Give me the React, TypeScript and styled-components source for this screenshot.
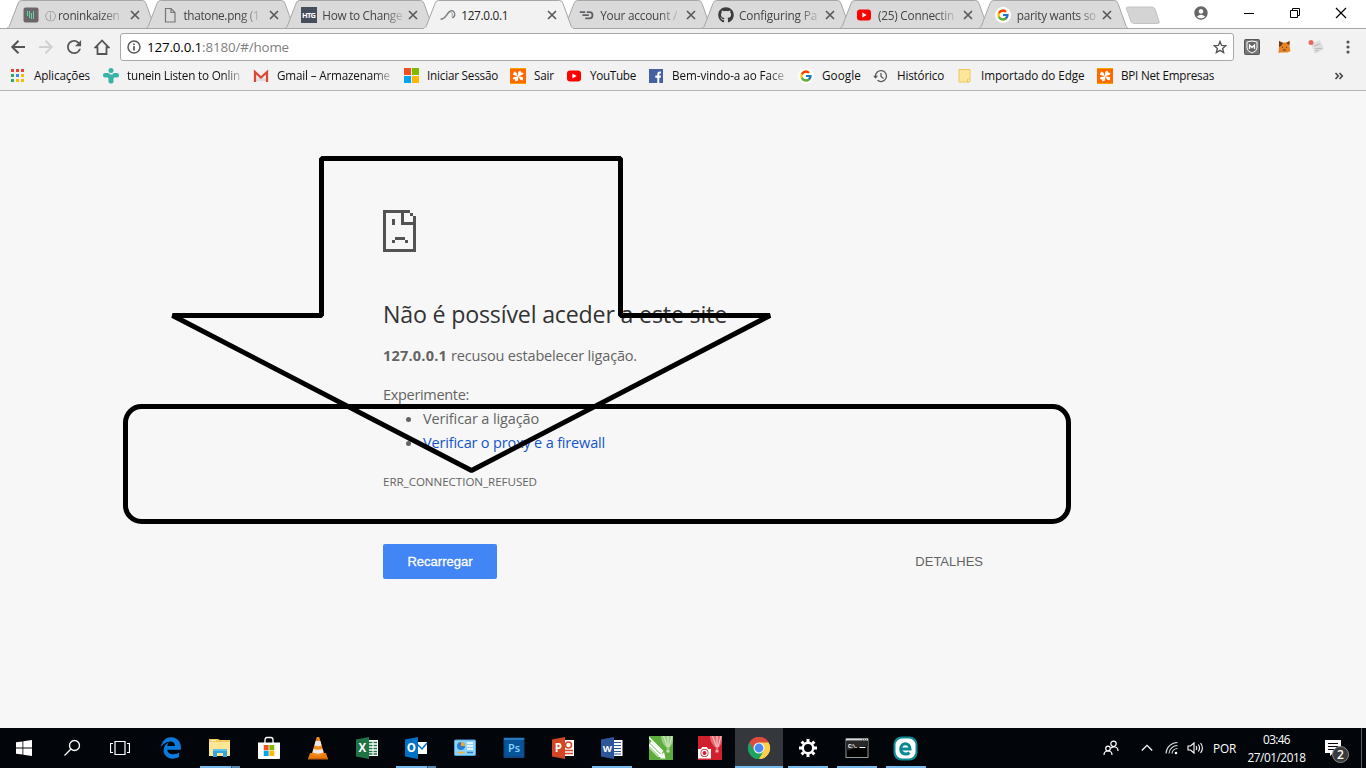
import React, { useLayoutEffect, useRef } from "react";
import styled, { createGlobalStyle, css } from "styled-components";
import { FaGithub, FaEdgeLegacy } from "react-icons/fa";
import { FcGoogle } from "react-icons/fc";
import { MdRefresh, MdAccountCircle } from "react-icons/md";

const UI_FONT = '"Open Sans", "Noto Sans", "Liberation Sans", sans-serif';

const GlobalStyle = createGlobalStyle`
  *, *::before, *::after { box-sizing: border-box; }
  body { margin: 0; overflow: hidden; font-family: ${UI_FONT}; }
  svg { display: block; flex: none; }
`;

const Screen = styled.div`
  position: relative;
  display: flex;
  flex-direction: column;
  width: 1366px;
  height: 768px;
  background: #f7f7f7;
`;

/* ---------- text set to a fixed measure ---------- */

const Measure = styled.span<{ $width: number; $fade?: boolean }>`
  display: block;
  flex: none;
  width: ${(p) => p.$width}px;
  white-space: pre;
  ${(p) =>
    p.$fade &&
    css`
      mask-image: linear-gradient(to right, #000 calc(100% - 18px), rgba(0, 0, 0, 0.2));
    `}
`;

function FitText({
  width,
  box,
  fade,
  children,
}: {
  width: number;
  box?: number;
  fade?: boolean;
  children: React.ReactNode;
}) {
  const ref = useRef<HTMLSpanElement>(null);
  useLayoutEffect(() => {
    const el = ref.current;
    if (!el) return;
    el.style.letterSpacing = "0px";
    const natural = el.getBoundingClientRect().width;
    const count = (el.textContent || "").length;
    el.style.letterSpacing = `${(width - natural) / count}px`;
  }, [width, children]);
  return (
    <Measure $width={box ?? width} $fade={fade}>
      <span ref={ref}>{children}</span>
    </Measure>
  );
}

/* ---------- tab strip ---------- */

const TabStrip = styled.header`
  position: relative;
  display: flex;
  height: 29px;
  padding-left: 6px;
  background: #fff;
  border-bottom: 1px solid #a6a6a6;
`;

const TabItem = styled.div<{ $active?: boolean }>`
  position: relative;
  z-index: ${(p) => (p.$active ? 2 : 1)};
  flex: none;
  width: 151px;
  height: 29px;
  margin-right: -12.1px;
`;

const TabShape = styled.svg`
  position: absolute;
  inset: 0;
`;

const TabContent = styled.div<{ $active?: boolean }>`
  position: relative;
  display: grid;
  grid-template-columns: 16px 82px 10px;
  column-gap: 4.5px;
  align-items: center;
  height: 29px;
  padding: 1px 0 0 17px;
  font-size: 11.8px;
  line-height: 16px;
  color: ${(p) => (p.$active ? "#222" : "#444")};
`;

const TabTitle = styled.div<{ $inset?: number }>`
  padding-left: ${(p) => p.$inset ?? 0}px;
  overflow: hidden;

  i {
    font-style: normal;
    font-size: 11px;
    color: #888;
  }
`;

const NewTab = styled.svg`
  margin: 6px 0 0 8px;
`;

const WindowControls = styled.div`
  display: flex;
  align-items: center;
  gap: 34px;
  height: 26px;
  margin-left: auto;
  padding-right: 19px;
`;

/* ---------- toolbar ---------- */

const Toolbar = styled.div`
  display: flex;
  align-items: center;
  height: 35px;
  padding: 1px 8px 0 10px;
  background: #f2f2f2;
`;

const NavButtons = styled.div`
  display: flex;
  flex: none;
  gap: 12px;
  width: 110px;
`;

const AddressBar = styled.div`
  display: flex;
  align-items: center;
  width: 1114px;
  flex: none;
  height: 28px;
  padding: 0 6px 0 6px;
  background: #fff;
  border: 1px solid #a9a9a9;
  border-radius: 3px;
  font-size: 13.4px;
  color: #000;
`;

const AddressText = styled.div`
  flex: 1;
  padding-left: 6px;
  line-height: 20px;

  i {
    font-style: normal;
    color: #808080;
  }
`;

const Extensions = styled.div`
  display: flex;
  align-items: center;
  gap: 16px;
  margin-left: 10px;
`;

const BookmarksBar = styled.nav`
  display: flex;
  align-items: center;
  gap: 12px;
  height: 27px;
  padding: 0 22px 3px 10px;
  background: #f2f2f2;
  border-bottom: 1px solid #b6b4b6;
  font-size: 11.7px;
  line-height: 15px;
  color: #111;
`;

const Bookmark = styled.div`
  display: flex;
  align-items: center;
  gap: 8px;
  flex: none;
`;

const IconSlot = styled.div`
  display: flex;
  align-items: center;
  justify-content: center;
  width: 16px;
  height: 16px;
`;

const Overflow = styled.div`
  margin-left: auto;
`;

/* ---------- error page ---------- */

const Page = styled.main`
  flex: 1;
  padding: 119px 0 0 383px;
  color: #646464;
  font-size: 14.5px;
  line-height: 24px;
`;

const ErrorBody = styled.section`
  width: 600px;
`;

const Title = styled.h1`
  margin: 46px 0 0;
  font-size: 23.2px;
  font-weight: 400;
  line-height: 33px;
  color: #333;
`;

const Reason = styled.p`
  display: flex;
  gap: 4px;
  margin: 13px 0 0;
`;

const Hint = styled.p`
  margin: 15px 0 0;
`;

const Suggestions = styled.ul`
  margin: 0;
  padding: 0 0 0 40px;
  list-style: none;
`;

const Suggestion = styled.li`
  display: flex;
  align-items: center;
  height: 24px;

  &::before {
    content: "";
    width: 5px;
    height: 5px;
    margin: 1px 12px 0 -17px;
    border-radius: 50%;
    background: #646464;
  }
`;

const Link = styled.a`
  color: #1155cc;
`;

const ErrorCode = styled.div`
  margin-top: 15px;
  font-size: 11.6px;
`;

const Actions = styled.div`
  display: flex;
  align-items: center;
  justify-content: space-between;
  margin-top: 50px;
  font-family: "Liberation Sans", Arial, sans-serif;
  font-size: 13px;
  line-height: 15px;
`;

const ReloadButton = styled.button`
  display: flex;
  justify-content: center;
  align-items: center;
  width: 114px;
  height: 35px;
  padding: 0;
  border: 0;
  border-radius: 2px;
  background: #4285f4;
  color: #fff;
  font: inherit;
  -webkit-text-stroke: 0.3px #fff;
`;

const Annotation = styled.svg`
  position: absolute;
  left: 0;
  top: 0;
  pointer-events: none;
`;

/* ---------- taskbar ---------- */

const Taskbar = styled.footer`
  display: flex;
  height: 40px;
  background: #02060b;
  color: #fff;
`;

const SystemButtons = styled.div`
  display: flex;
  width: 146px;
`;

const SystemButton = styled.div`
  display: flex;
  align-items: center;
  justify-content: center;
  width: 48px;
`;

const Apps = styled.div`
  display: flex;
`;

const AppButton = styled.div<{ $focused?: boolean }>`
  display: flex;
  align-items: center;
  justify-content: center;
  position: relative;
  width: 49px;
  height: 40px;
  background: ${(p) => (p.$focused ? "linear-gradient(#34383c, #34383c) center / 48px 40px no-repeat" : "none")};
`;

const RunningBar = styled.span<{ $kind: "one" | "many" | "full" }>`
  position: absolute;
  bottom: 0;
  left: ${(p) => (p.$kind === "full" ? 0.5 : 4.5)}px;
  right: ${(p) => (p.$kind === "full" ? 0.5 : 4.5)}px;
  height: 2px;
  background: ${(p) =>
    p.$kind === "many"
      ? "linear-gradient(to right, #76b9ed 31px, #33506a 31px, #33506a 32px, #5688ae 32px)"
      : "#76b9ed"};
`;

const Tray = styled.div`
  display: flex;
  align-items: center;
  margin-left: auto;
  font-size: 11.8px;
  line-height: 18px;
`;

const TrayIcon = styled.div<{ $width: number }>`
  display: flex;
  justify-content: center;
  width: ${(p) => p.$width}px;
`;

const Clock = styled.div`
  display: flex;
  flex-direction: column;
  align-items: center;
  width: 81px;
  margin-right: 1px;
`;

const Notifications = styled.div`
  position: relative;
  width: 44px;
  height: 40px;
  padding: 12px 0 0 7px;
  border-right: 1px solid #5a5d60;
  margin-right: 4px;
`;

const Badge = styled.span`
  position: absolute;
  left: 14px;
  top: 18px;
  width: 17px;
  height: 17px;
  border: 1px solid #8a8a8a;
  border-radius: 50%;
  background: #3a3a3a;
  font-size: 12px;
  font-weight: 600;
  line-height: 15px;
  text-align: center;
`;

/* ---------- small icons ---------- */

const CloseIcon = () => (
  <svg width="10" height="10" viewBox="0 0 10 10" stroke="#5a5a5a" strokeWidth="1.7">
    <path d="M1 1l8 8M9 1L1 9" />
  </svg>
);

const YouTubeIcon = () => (
  <svg width="16" height="16" viewBox="0 0 16 16">
    <rect x="1" y="2.5" width="14" height="11" rx="3" fill="#f00" />
    <path d="M6.4 5.6v4.8L10.6 8z" fill="#fff" />
  </svg>
);

const GoogleIcon = () => (
  <svg width="16" height="16" viewBox="0 0 16 16">
    <circle cx="8" cy="8" r="8" fill="#fff" />
    <svg x="1.3" y="1.3" width="13.4" height="13.4" viewBox="0 0 24 24">
      <FcGoogle size={24} />
    </svg>
  </svg>
);

const BarsIcon = () => (
  <svg width="16" height="16" viewBox="0 0 16 16">
    <rect x="0.5" y="0.5" width="15" height="15" rx="2" fill="#6c666b" />
    <path d="M4.500 4v5M6.500 4v7M8.500 6v6M10.500 4v8" stroke="#62d6a0" strokeWidth="1" />
  </svg>
);

const FileIcon = () => (
  <svg width="16" height="16" viewBox="0 0 16 16" fill="none" stroke="#777" strokeWidth="1.2">
    <path d="M3.5 1.5h5.5l4 4v9.500h-9.500zM9 1.500v4h4" />
  </svg>
);

const HtgIcon = () => (
  <svg width="16" height="16" viewBox="0 0 16 16">
    <rect width="16" height="16" fill="#454f5c" />
    <text x="8" y="10.800" fontSize="7.500" fontWeight="700" fill="#fff" textAnchor="middle" textLength="14" fontFamily="Open Sans, sans-serif">
      HTG
    </text>
  </svg>
);

const SwooshIcon = () => (
  <svg width="16" height="16" viewBox="0 0 16 16" fill="none" stroke="#777">
    <path d="M.5 12.200C4.500 12.200 5.500 9.500 7.500 6.500S12 2.800 13.800 4.800 15 10 12.200 10.800" strokeWidth="1.300" />
    <path d="M3 11.800C6 10.500 6.800 8.500 8.500 6.500s3.200-2 3.700.3-.4 3-.4 3" strokeWidth="1" stroke="#999" />
  </svg>
);

const SpeedIcon = () => (
  <svg width="16" height="16" viewBox="0 0 16 16" fill="none" stroke="#5f6064" strokeWidth="1.800">
    <path d="M.8 5.200h5.400M3.500 8.200h6.300M7.800 5.200h2.700c4 0 4 6.200 0 6.200H6.300" />
  </svg>
);

const AppsIcon = () => {
  const colors = ["#ea4335", "#ea4335", "#ea4335", "#34a853", "#4285f4", "#fbbc05", "#34a853", "#fbbc05", "#fbbc05"];
  return (
    <svg width="16" height="16" viewBox="0 0 16 16">
      {colors.map((c, i) => (
        <rect key={i} x={1 + (i % 3) * 5} y={1 + Math.floor(i / 3) * 5} width="3" height="3" fill={c} />
      ))}
    </svg>
  );
};

const TuneInIcon = () => (
  <svg width="16" height="16" viewBox="0 0 16 16" fill="#36b4a7">
    <circle cx="8" cy="2.600" r="2.500" />
    <rect x="0" y="5" width="7" height="4.500" rx="2" />
    <rect x="9.500" y="5" width="6.500" height="4.500" rx="2" />
    <rect x="5.500" y="9" width="5" height="6.500" rx="2" />
    <path d="M5 6.500h6v4H5z" />
  </svg>
);

const GmailIcon = () => (
  <svg width="16" height="16" viewBox="0 0 16 16">
    <path d="M1 3h14v11H1z" fill="#f1efef" />
    <path d="M2 13l4.500-4.500L8 10l1.500-1.500L14 13z" fill="#ddd" />
    <path d="M2 14V4l6 5.500L14 4v10" fill="none" stroke="#d9483b" strokeWidth="2.300" />
  </svg>
);

const MicrosoftIcon = ({ size = 15 }: { size?: number }) => (
  <svg width={size} height={size} viewBox="0 0 15 15">
    <path d="M0 0h7v7H0z" fill="#f25022" />
    <path d="M8 0h7v7H8z" fill="#7fba00" />
    <path d="M0 8h7v7H0z" fill="#00a4ef" />
    <path d="M8 8h7v7H8z" fill="#ffb900" />
  </svg>
);

const BpiIcon = () => (
  <svg width="16" height="16" viewBox="0 0 16 16">
    <rect width="16" height="16" fill="#ff6a00" />
    <path d="M0 .5h16M0 15.500h16" stroke="#f5a400" />
    <g fill="#fff">
      <path d="M8 8.500L3 6.800 4 3.500l2.500 1.200z" />
      <path d="M8 8.500L8.200 4l2-1.500.8 2 2.500.5-1 1.800z" />
      <path d="M8 8l4.800 1.200.2 3-2.500-.2z" />
      <path d="M8.500 8.200L8 12.500 5.500 13.500 5 11.500 2.800 11l.8-1.800z" />
    </g>
  </svg>
);

const FacebookIcon = () => (
  <svg width="16" height="16" viewBox="0 0 16 16">
    <rect x="1" y="1" width="14" height="14" fill="#4460a0" />
    <path d="M9.300 15V9.700H7.300V7.400h2V6c0-2 1.200-2.800 3.600-2.500v2c-1.200-.1-1.600.1-1.600.9v1H13l-.3 2.300h-1.400V15z" fill="#fff" />
  </svg>
);

const HistoryIcon = () => (
  <svg width="16" height="16" viewBox="0 0 16 16" fill="none" stroke="#5a5a5a" strokeWidth="1.300">
    <path d="M2.500 8.500A5.500 5.500 0 1 1 4.500 12.300M8 5v3.500l2.500 2" />
    <path d="M.1 7.800h5L2.500 10.800z" fill="#5a5a5a" stroke="none" />
  </svg>
);

const FolderIcon = () => (
  <svg width="16" height="16" viewBox="0 0 16 16">
    <path d="M2 1.500h11v9l-1 3.500H2z" fill="#ffe69a" stroke="#ecc85c" />
    <path d="M10.500 14v-3H13v2.500z" fill="#fff3c4" stroke="#ecc85c" />
  </svg>
);

/* ---------- data ---------- */

const tabs = [
  { icon: <BarsIcon />, mark: "ⓘ", title: " roninkaizen", width: 75, inset: 1, fade: true },
  { icon: <FileIcon />, title: "thatone.png (1", width: 76, inset: 1, fade: true },
  { icon: <HtgIcon />, title: "How to Change", width: 80, inset: 1, fade: true },
  { icon: <SwooshIcon />, title: "127.0.0.1", width: 47, inset: 1, active: true },
  { icon: <SpeedIcon />, title: "Your account /", width: 77, inset: 1, fade: true },
  { icon: <FaGithub size={16} color="#3c3c3c" />, title: "Configuring Pa", width: 78, inset: 1, fade: true },
  { icon: <YouTubeIcon />, title: "(25) Connectin", width: 76, inset: 1, fade: true },
  { icon: <GoogleIcon />, title: "parity wants so", width: 79, inset: 1, fade: true },
];

const bookmarks = [
  { icon: <AppsIcon />, label: "Aplicações", width: 56, box: 57 },
  { icon: <TuneInIcon />, label: "tunein Listen to Onlin", width: 113, box: 114, fade: true },
  { icon: <GmailIcon />, label: "Gmail – Armazename", width: 113, box: 114, fade: true },
  { icon: <MicrosoftIcon />, label: "Iniciar Sessão", width: 71, box: 71 },
  { icon: <BpiIcon />, label: "Sair", width: 20, box: 20 },
  { icon: <YouTubeIcon />, label: "YouTube", width: 46, box: 46 },
  { icon: <FacebookIcon />, label: "Bem-vindo-a ao Face", width: 112, box: 114, fade: true },
  { icon: <GoogleIcon />, label: "Google", width: 39, box: 39 },
  { icon: <HistoryIcon />, label: "Histórico", width: 47, box: 48 },
  { icon: <FolderIcon />, label: "Importado do Edge", width: 103.5, box: 104 },
  { icon: <BpiIcon />, label: "BPI Net Empresas", width: 93, box: 94 },
];

/* ---------- taskbar icons ---------- */

const OfficeIcon = ({ color, letter, children }: { color: string; letter: string; children: React.ReactNode }) => (
  <svg width="24" height="24" viewBox="0 0 24 24">
    {children}
    <path d="M1 3.500L14 1v22L1 20.500z" fill={color} />
    <text x="7.300" y="16" fontSize={letter === "W" ? 9.5 : 11.5} fontWeight="700" fill="#fff" textAnchor="middle" fontFamily="Open Sans, sans-serif">
      {letter}
    </text>
  </svg>
);

const ExplorerIcon = () => (
  <svg width="24" height="24" viewBox="0 0 24 24">
    <path d="M1 3h9l2 1h10v16H1z" fill="#f5c95b" />
    <path d="M1 6h21v14H1z" fill="#ffe694" />
    <path d="M3 4h5v1.200H3z" fill="#fff4c8" />
    <path d="M5 21v-8h14v8h-4v-4H9v4z" fill="#35a5dd" />
    <path d="M5 13h14v2H5z" fill="#5dc0ee" />
  </svg>
);

const StoreIcon = () => (
  <svg width="24" height="24" viewBox="0 0 24 24">
    <path d="M8 7V4q0-2.500 2-2.500h4q2 0 2 2.500v3" fill="none" stroke="#fff" strokeWidth="1.300" />
    <path d="M1 6.500h22V22q0 1-1 1H2q-1 0-1-1z" fill="#fff" />
    <svg x="6.500" y="9" width="11" height="11" viewBox="0 0 15 15">
      <MicrosoftIcon />
    </svg>
  </svg>
);

const VlcIcon = () => (
  <svg width="24" height="24" viewBox="0 0 24 24">
    <path d="M4 17h16l2 6H2z" fill="#e87b0c" />
    <path d="M10.800 1h2.400l5.200 17.500q-6.500 3-12.800 0z" fill="#f58a1c" />
    <path d="M9.600 5h4.800l1.200 4.500q-3.600 1.500-7.200 0zM7.500 13q4.500 1.600 9 0l1 3.500q-5.500 2.300-11 0z" fill="#e9e9e9" />
    <path d="M2 22h20v1.500H2z" fill="#c96206" />
  </svg>
);

const ControlPanelIcon = () => (
  <svg width="22" height="18" viewBox="0 0 22 18">
    <rect x=".5" y="1" width="21" height="15.500" rx="1" fill="#8ed2f8" stroke="#4ba3dd" />
    <circle cx="7" cy="7" r="4" fill="#2a7fd0" />
    <path d="M7 7V3a4 4 0 0 1 4 4z" fill="#f7a728" />
    <path d="M13 4h6M13 7h6M13 10h6" stroke="#fff" strokeWidth="1.500" />
    <path d="M3 13.500h8" stroke="#f0b23a" strokeWidth="1.500" />
    <path d="M13 13.500h6" stroke="#2a7fd0" strokeWidth="1.500" />
  </svg>
);

const PhotoshopIcon = () => (
  <svg width="24" height="24" viewBox="0 0 24 24">
    <rect x="1.500" y="1.500" width="21" height="20.500" rx="1" fill="#0d4884" />
    <path d="M2 2h20v2H2z" fill="#2c78bd" />
    <path d="M3 4h18v16H3z" fill="#07549a" />
    <text x="12" y="15.500" fontSize="11" fontWeight="600" fill="#8bd5ff" textAnchor="middle" fontFamily="Open Sans, sans-serif">
      Ps
    </text>
  </svg>
);

const CorelIcon = ({ red }: { red?: boolean }) => (
  <svg width="24" height="24" viewBox="0 0 24 24">
    <rect width="24" height="24" fill={red ? "#d0202e" : "#5fac3e"} />
    <path d="M12 0q0 7 5.500 11.500L18 14h2l.5-2.500Q24 8 24 3V0z" fill={red ? "#e56c74" : "#9bcd84"} />
    <path d="M14.500 0l4 11M19 0v11M23 0l-3 11" stroke={red ? "#f7c9cc" : "#d3eac9"} strokeWidth="1" />
    <path d="M17.500 14h3v2.500h-3z" fill={red ? "#f0a8ad" : "#c6e2ba"} />
    {red ? (
      <g>
        <path d="M0 13h3l1-2h5l1 2h3v9.500H0z" fill="#fff" />
        <circle cx="6.500" cy="17" r="4" fill="#d0202e" />
        <circle cx="6.500" cy="17" r="2.600" fill="none" stroke="#fff" strokeWidth="1.300" />
      </g>
    ) : (
      <g>
        <path d="M0 8.500L2.500 5 13 15.500 14.500 22 8.500 20.500 0 12z" fill="#fff" />
        <path d="M1 7.500L11.500 18M0 10.500l9.500 9.500" stroke="#5fac3e" strokeWidth=".9" />
        <path d="M0 1.500l14 14" stroke="#fff" strokeWidth="1.400" />
        <path d="M11 22.500h5.500L15 16z" fill="#fff" />
      </g>
    )}
  </svg>
);

const ChromeIcon = () => (
  <svg width="24" height="24" viewBox="0 0 24 24">
    <path d="M12 12L2.470 6.500A11 11 0 0 1 21.530 6.500z" fill="#dd4b3e" />
    <path d="M12 12l9.530-5.500A11 11 0 0 1 12 23z" fill="#fdd04b" />
    <path d="M12 12v11A11 11 0 0 1 2.470 6.500z" fill="#1da362" />
    <path d="M12 6.500h9.530A11 11 0 0 0 2.470 6.500l4.800 8.250z" fill="#dd4b3e" />
    <path d="M16.760 14.750L12 23a11 11 0 0 0 9.530-16.500H12z" fill="#fdd04b" />
    <path d="M7.240 14.750L2.470 6.500A11 11 0 0 0 12 23l4.760-8.250z" fill="#1da362" />
    <circle cx="12" cy="12" r="5.500" fill="#f2f2f2" />
    <circle cx="12" cy="12" r="4.400" fill="#4a8af4" />
  </svg>
);

const GearIcon = () => (
  <svg width="20" height="20" viewBox="-10 -10 20 20" fill="none" stroke="#fff">
    <circle r="5.200" strokeWidth="2.400" />
    {[0, 45, 90, 135, 180, 225, 270, 315].map((a) => (
      <path key={a} d="M0-6v-3" strokeWidth="3" transform={`rotate(${a})`} />
    ))}
  </svg>
);

const TerminalIcon = () => (
  <svg width="24" height="20" viewBox="0 0 24 20">
    <rect x="1" y="1" width="22" height="18.500" fill="#000" stroke="#9a9a9a" />
    <path d="M1 3L23 3 23 8Q12 9 1 13z" fill="#292929" />
    <path d="M1 1.500h22" stroke="#dcdcdc" strokeWidth="2" />
    <path d="M17 1.500h5" stroke="#777" strokeDasharray="1 1" />
    <text x="3" y="10" fontSize="6" fontWeight="700" fill="#fff" fontFamily="Liberation Mono, monospace" textLength="10">
      C:\.
    </text>
    <path d="M14.500 9.500h6" stroke="#fff" />
  </svg>
);

const EsetIcon = () => (
  <svg width="25" height="25" viewBox="0 0 25 25">
    <rect x=".5" y=".5" width="24" height="24" rx="8" fill="#0c8a93" />
    <rect x="2.500" y="2.500" width="20" height="20" rx="6.500" fill="#fff" />
    <path d="M7.500 13H17c0-7-9.300-7-9.300 0 0 5.600 6.200 6 8.800 3.600" fill="none" stroke="#0c8a93" strokeWidth="3" />
  </svg>
);

const taskbarApps: { icon: React.ReactNode; running?: "one" | "many" | "full" }[] = [
  { icon: <FaEdgeLegacy size={22} color="#0a7bdc" /> },
  { icon: <ExplorerIcon />, running: "many" },
  { icon: <StoreIcon /> },
  { icon: <VlcIcon /> },
  {
    icon: (
      <OfficeIcon color="#207346" letter="X">
        <rect x="12" y="4" width="11" height="16" fill="#fff" />
        <path d="M14 6.500h8M14 9.500h8M14 12.500h8M14 15.500h8M14 18h8" stroke="#207346" strokeWidth="1.400" />
        <path d="M18 4v16" stroke="#fff" />
      </OfficeIcon>
    ),
  },
  {
    icon: (
      <OfficeIcon color="#0072c6" letter="O">
        <rect x="12" y="6" width="11" height="12" fill="#fff" />
        <path d="M13 8l5 5 5-6" stroke="#0072c6" fill="none" strokeWidth="1.500" />
      </OfficeIcon>
    ),
    running: "many",
  },
  { icon: <ControlPanelIcon /> },
  { icon: <PhotoshopIcon /> },
  {
    icon: (
      <OfficeIcon color="#d24625" letter="P">
        <rect x="12" y="4" width="11" height="16" fill="#fff" />
        <circle cx="17.500" cy="9" r="3" fill="none" stroke="#d24625" strokeWidth="1.500" />
        <path d="M14 14.500h8M14 17.500h8" stroke="#d24625" strokeWidth="1.300" />
      </OfficeIcon>
    ),
  },
  {
    icon: (
      <OfficeIcon color="#2b579a" letter="W">
        <rect x="12" y="4" width="10.500" height="16" fill="#fff" />
        <path d="M14 6.500h7M14 9.500h7M14 12.500h7M14 15.500h7M14 18h7" stroke="#2b579a" strokeWidth="1.200" />
      </OfficeIcon>
    ),
    running: "one",
  },
  { icon: <CorelIcon /> },
  { icon: <CorelIcon red /> },
  { icon: <ChromeIcon />, running: "full" },
  { icon: <GearIcon />, running: "one" },
  { icon: <TerminalIcon />, running: "one" },
  { icon: <EsetIcon />, running: "one" },
];

/* ---------- page ---------- */

export default function App() {
  return (
    <Screen>
      <GlobalStyle />
      <TabStrip>
        {tabs.map((t) => (
          <TabItem key={t.title} $active={t.active}>
            <TabShape width="151" height="29" viewBox="0 0 151 29">
              <path
                d="M.5 28.500C3 27.500 3.500 26 4.500 23L12 3.500Q13 .5 15.500 .5H136.500Q139 .5 140 3.500L147 23C148 26 148.500 27.500 150.500 28.500"
                fill={t.active ? "#f2f2f2" : "#dadada"}
                stroke="#a6a6a6"
              />
              <path d="M1 28.500h149" stroke={t.active ? "#f2f2f2" : "#a6a6a6"} />
            </TabShape>
            <TabContent $active={t.active}>
              {t.icon}
              <TabTitle $inset={t.inset}>
                <FitText width={t.width} fade={t.fade}>
                  {t.mark && <i>{t.mark}</i>}
                  {t.title}
                </FitText>
              </TabTitle>
              <CloseIcon />
            </TabContent>
          </TabItem>
        ))}
        <NewTab width="36" height="19" viewBox="0 0 36 19">
          <path d="M3 1h24q2 0 3 2l4 12q1 2.500-1.500 2.500H9q-2 0-3-2L1.500 3Q1 1 3 1z" fill="#d4d4d4" stroke="#c2c2c2" />
        </NewTab>
        <WindowControls>
          <MdAccountCircle size={16} color="#666" />
          <svg width="12" height="12" viewBox="0 0 12 12" stroke="#000">
            <path d="M1 6.500h10" />
          </svg>
          <svg width="12" height="12" viewBox="0 0 12 12" fill="none" stroke="#000">
            <path d="M1.500 3.500h7v7h-7zM3.500 3.500v-2h7v7h-2" />
          </svg>
          <svg width="12" height="12" viewBox="0 0 12 12" stroke="#000" strokeWidth="1.200">
            <path d="M1 1l10 10M11 1L1 11" />
          </svg>
        </WindowControls>
      </TabStrip>

      <Toolbar>
        <NavButtons>
          <svg width="16" height="16" viewBox="0 0 16 16" fill="none" stroke="#555" strokeWidth="2">
            <path d="M15 8H2.500M8.500 1.800L2.300 8l6.200 6.200" />
          </svg>
          <svg width="16" height="16" viewBox="0 0 16 16" fill="none" stroke="#d0d0d0" strokeWidth="2">
            <path d="M1 8h12.500M7.500 1.800L13.700 8l-6.200 6.200" />
          </svg>
          <svg width="16" height="16" viewBox="0 0 16 16">
            <svg x="-2.400" y="-2.400" width="21" height="21" viewBox="0 0 24 24">
              <MdRefresh size={24} color="#555" />
            </svg>
          </svg>
          <svg width="16" height="16" viewBox="1 0 16 16" fill="none" stroke="#555" strokeWidth="1.800">
            <path d="M9 1.500L2.500 8.300h2V15h9V8.300h2z" />
          </svg>
        </NavButtons>
        <AddressBar>
          <svg width="14" height="14" viewBox="0 0 14 14" fill="none" stroke="#5a5a5a" strokeWidth="1.500">
            <circle cx="7" cy="7" r="6" />
            <path d="M7 6v4.500M7 3.400v1.600" strokeWidth="1.700" />
          </svg>
          <AddressText>
            <FitText width={142}>
              127.0.0.1<i>:8180/#/home</i>
            </FitText>
          </AddressText>
          <svg width="14" height="14" viewBox="0 0 14 14" fill="none" stroke="#555" strokeWidth="1.400">
            <path d="M7 1.500l1.600 3.900 4.200.3-3.200 2.700 1 4.100L7 10.300l-3.600 2.200 1-4.100L1.200 5.700l4.200-.3z" />
          </svg>
        </AddressBar>
        <Extensions>
          <svg width="16" height="16" viewBox="0 0 16 16">
            <rect x=".5" y=".5" width="15" height="15" rx="1" fill="#777" stroke="#555" />
            <path d="M8 2l5 1v6q0 3-5 5-5-2-5-5V3z" fill="#666" stroke="#fff" />
            <path d="M5.500 10V6L8 8.500 10.500 6v4" fill="none" stroke="#fff" strokeWidth="1.300" />
          </svg>
          <svg width="16" height="16" viewBox="0 0 16 16">
            <path d="M3 2l3 1.500h5L13.500 2v5l1 5-3 1.500H5l-2.500.5L3 9z" fill="#e88324" />
            <path d="M3 2l4 2-2 3-2 1zM10 4l3.500-2v4z" fill="#6b3a18" />
            <path d="M6 8l1 .8M11 8l-1 .8M7 11h3" stroke="#5a3a20" />
          </svg>
          <svg width="16" height="16" viewBox="0 0 16 16">
            <path d="M3 5l9-4 4 9-9 5z" fill="#dedede" />
            <path d="M6 7l6-2M7 9.500h7M7 12l4-1" stroke="#bbb" />
            <circle cx="3" cy="3.500" r="2.500" fill="#e8685c" />
          </svg>
          <svg width="16" height="16" viewBox="0 0 16 16" fill="#555">
            <circle cx="8" cy="3" r="1.600" />
            <circle cx="8" cy="8" r="1.600" />
            <circle cx="8" cy="13" r="1.600" />
          </svg>
        </Extensions>
      </Toolbar>

      <BookmarksBar>
        {bookmarks.map((b) => (
          <Bookmark key={b.label}>
            <IconSlot>{b.icon}</IconSlot>
            <FitText width={b.width} box={b.box} fade={b.fade}>
              {b.label}
            </FitText>
          </Bookmark>
        ))}
        <Overflow>
          <svg width="10" height="8" viewBox="0 0 10 8" fill="none" stroke="#444" strokeWidth="1.600">
            <path d="M1.500 1L4.300 4 1.500 7M5.500 1l2.800 3-2.800 3" />
          </svg>
        </Overflow>
      </BookmarksBar>

      <Page>
        <ErrorBody>
          <svg width="33" height="42" viewBox="0 0 33 42" fill="#535353" shapeRendering="crispEdges">
            <path d="M0 0h27v3h-6v9h9V6h3v36H0zM3 3v36h27V15H18V3z" fillRule="evenodd" />
            <path d="M27 3h3v3h-3zM9 9h3v6H9zM12 27h10v3H12zM9 30h3v3H9zM22 30h3v3h-3z" />
          </svg>
          <Title>
            <FitText width={344}>Não é possível aceder a este site</FitText>
          </Title>
          <Reason>
            <b>
              <FitText width={64}>127.0.0.1</FitText>
            </b>
            <FitText width={186}>recusou estabelecer ligação.</FitText>
          </Reason>
          <Hint>
            <FitText width={86}>Experimente:</FitText>
          </Hint>
          <Suggestions>
            <Suggestion>
              <FitText width={116}>Verificar a ligação</FitText>
            </Suggestion>
            <Suggestion>
              <Link>
                <FitText width={182}>Verificar o proxy e a firewall</FitText>
              </Link>
            </Suggestion>
          </Suggestions>
          <ErrorCode>
            <FitText width={154}>ERR_CONNECTION_REFUSED</FitText>
          </ErrorCode>
          <Actions>
            <ReloadButton>Recarregar</ReloadButton>
            <span>DETALHES</span>
          </Actions>
        </ErrorBody>
      </Page>

      <Taskbar>
        <SystemButtons>
          <SystemButton>
            <svg width="16" height="16" viewBox="0 0 16 16" fill="#fff">
              <path d="M0 2.300L6.500 1.400v6.200H0zM7.300 1.300L16 0v7.600H7.300zM0 8.400h6.500v6.200L0 13.700zM7.300 8.400H16V16l-8.700-1.300z" />
            </svg>
          </SystemButton>
          <SystemButton>
            <svg width="18" height="18" viewBox="0 0 18 18" fill="none" stroke="#fff" strokeWidth="1.300">
              <circle cx="11.500" cy="6.500" r="5" />
              <path d="M8 10l-6.500 6.500" />
            </svg>
          </SystemButton>
          <SystemButton>
            <svg width="20" height="16" viewBox="0 0 20 16" fill="none" stroke="#fff">
              <path d="M5 1.500h10v13H5zM3 3.500H.5v9H3M17 3.500h2.500v9H17" strokeWidth="1.200" />
            </svg>
          </SystemButton>
        </SystemButtons>
        <Apps>
          {taskbarApps.map((a, i) => (
            <AppButton key={i} $focused={a.running === "full"}>
              {a.icon}
              {a.running && <RunningBar $kind={a.running} />}
            </AppButton>
          ))}
        </Apps>
        <Tray>
          <TrayIcon $width={36}>
            <svg width="16" height="16" viewBox="0 0 16 16" fill="none" stroke="#fff" strokeWidth="1.200">
              <circle cx="10.500" cy="3.800" r="2.700" />
              <circle cx="5" cy="8.500" r="2.300" />
              <path d="M1 15q0-4 4-4t4 4M8 8q2-1.500 4-1 3 .5 3 4" />
            </svg>
          </TrayIcon>
          <TrayIcon $width={36}>
            <svg width="12" height="8" viewBox="0 0 12 8" fill="none" stroke="#fff" strokeWidth="1.300">
              <path d="M.8 6.500L6 1.300l5.200 5.200" />
            </svg>
          </TrayIcon>
          <TrayIcon $width={13}>
            <svg width="14" height="14" viewBox="0 0 14 14" fill="none" stroke="#ddd" strokeWidth="1.100">
              <path d="M1 12.500A11.500 11.500 0 0 1 12.500 1.500M4 12.500a8.500 8.500 0 0 1 8.500-8M7 12.500a5.500 5.500 0 0 1 5.500-5" />
              <circle cx="11" cy="12" r="1.300" fill="#fff" stroke="none" />
            </svg>
          </TrayIcon>
          <TrayIcon $width={35}>
            <svg width="17" height="14" viewBox="0 0 17 14" fill="none" stroke="#fff" strokeWidth="1.100">
              <path d="M1 5h2.500L7 2v10L3.500 9H1zM9 5q1.500 2 0 4M11.300 3.500q2.500 3.500 0 7M13.600 2q3.600 5 0 10" />
            </svg>
          </TrayIcon>
          <FitText width={23}>POR</FitText>
          <Clock>
            <FitText width={27}>03:46</FitText>
            <FitText width={58}>27/01/2018</FitText>
          </Clock>
          <Notifications>
            <svg width="16" height="16" viewBox="0 0 16 16">
              <path d="M0 0h16v13H8l-3 3v-3H0z" fill="#fff" />
              <path d="M3 3.500h10M3 6.500h10M3 9.500h7" stroke="#02060b" />
            </svg>
            <Badge>2</Badge>
          </Notifications>
        </Tray>
      </Taskbar>

      <Annotation width="1366" height="728" viewBox="0 0 1366 728" fill="none" stroke="#000" strokeWidth="5">
        <path d="M321.500 158.500h299v157H770L471.500 470.500 172.500 315.500h149z" strokeLinejoin="bevel" />
        <rect x="125.500" y="406.500" width="943" height="115" rx="16" />
      </Annotation>
    </Screen>
  );
}
